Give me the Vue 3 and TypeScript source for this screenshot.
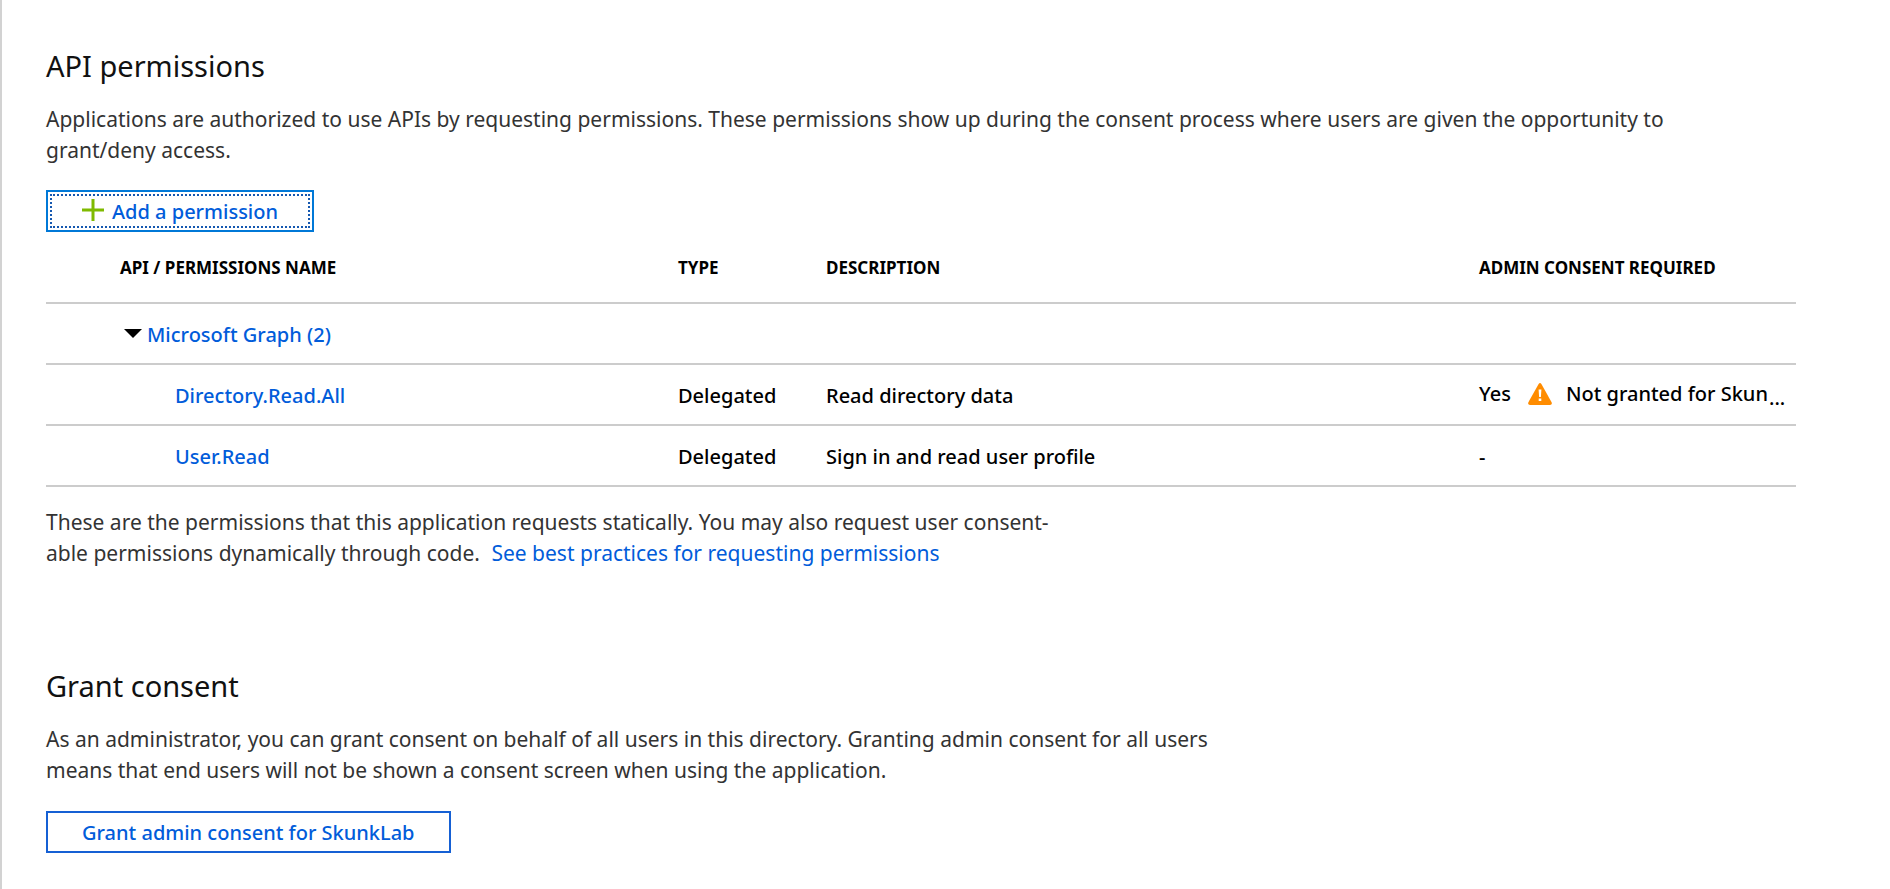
<script setup lang="ts">
import { ref } from 'vue'

interface Permission {
  name: string
  type: string
  description: string
  consent: string
  warning?: string
}

const expanded = ref(true)

const permissions: Permission[] = [
  {
    name: 'Directory.Read.All',
    type: 'Delegated',
    description: 'Read directory data',
    consent: 'Yes',
    warning: 'Not granted for Skun',
  },
  {
    name: 'User.Read',
    type: 'Delegated',
    description: 'Sign in and read user profile',
    consent: '-',
  },
]
</script>

<template>
  <main class="blade">
    <section class="permissions">
      <h1 class="title">API permissions</h1>
      <p class="text intro">
        Applications are authorized to use APIs by requesting permissions. These permissions show up
        during the consent process where users are given the opportunity to grant/deny access.
      </p>

      <button type="button" class="btn btn-focused">
        <svg class="plus" viewBox="0 0 22 22" aria-hidden="true">
          <path d="M11 0v22M0 11h22" />
        </svg>
        Add a permission
      </button>

      <table class="grid">
        <colgroup>
          <col class="col-name" />
          <col class="col-type" />
          <col />
          <col class="col-consent" />
        </colgroup>
        <thead>
          <tr>
            <th scope="col" class="name">API / PERMISSIONS NAME</th>
            <th scope="col">TYPE</th>
            <th scope="col">DESCRIPTION</th>
            <th scope="col">ADMIN CONSENT REQUIRED</th>
          </tr>
        </thead>
        <tbody>
          <tr>
            <td class="group" colspan="4">
              <button
                type="button"
                class="toggle"
                :aria-expanded="expanded"
                @click="expanded = !expanded"
              >
                <svg class="caret" viewBox="0 0 18 9" aria-hidden="true">
                  <path d="M0 0h18l-9 9z" />
                </svg>
                Microsoft Graph (2)
              </button>
            </td>
          </tr>
          <template v-if="expanded">
            <tr v-for="p in permissions" :key="p.name">
              <td class="item"><a href="#">{{ p.name }}</a></td>
              <td>{{ p.type }}</td>
              <td>{{ p.description }}</td>
              <td>
                <div v-if="p.warning" class="status">
                  <span>{{ p.consent }}</span>
                  <svg class="warn" viewBox="0 0 24 22" aria-hidden="true">
                    <path
                      class="warn-body"
                      d="M10.600 .9Q12-.8 13.400 .9L23.600 19.300Q24.400 21.800 22 22H2Q-.4 21.800 .4 19.300Z"
                    />
                    <path class="warn-mark" d="M10.600 6.500h2.800l-.5 7.500h-1.800zM10.700 15.500h2.600v2.600h-2.600z" />
                  </svg>
                  <span>{{ p.warning }}</span><span class="dots">...</span>
                </div>
                <template v-else>{{ p.consent }}</template>
              </td>
            </tr>
          </template>
        </tbody>
      </table>

      <p class="text note">
        <span>
          These are the permissions that this application requests statically. You may also request
          user consent-able permissions dynamically through code.
        </span>
        <a href="#" class="learn">See best practices for requesting permissions</a>
      </p>
    </section>

    <section>
      <h2 class="title">Grant consent</h2>
      <p class="text grant">
        As an administrator, you can grant consent on behalf of all users in this directory. Granting
        admin consent for all users means that end users will not be shown a consent screen when
        using the application.
      </p>
      <button type="button" class="btn">Grant admin consent for SkunkLab</button>
    </section>
  </main>
</template>

<style>
body {
  background: #fff;
}
</style>

<style scoped>
.blade {
  box-sizing: border-box;
  min-height: 100vh;
  padding: 46px 94px 32px 44px;
  border-left: 2px solid #d2d2d2;
  font-family: "Noto Sans", "Open Sans", sans-serif;
  color: #000;
}

.permissions {
  margin-bottom: 97px;
}

.title {
  margin: 0 0 18px;
  font-size: 29px;
  line-height: 40px;
  font-weight: 400;
  color: #111;
}

.text {
  margin: 0;
  font-size: 21px;
  line-height: 31px;
  color: #333;
}

.intro {
  max-width: 1680px;
  margin-bottom: 24px;
}

.note {
  max-width: 1030px;
  margin-top: 20px;
}

.grant {
  max-width: 1220px;
  margin-bottom: 25px;
}

a {
  color: #015cda;
  text-decoration: none;
}

.learn {
  margin-left: 6px;
}

.btn {
  display: flex;
  align-items: center;
  gap: 8px;
  box-sizing: border-box;
  height: 42px;
  padding: 2px 34px 0;
  border: 2px solid #1560d4;
  background: #fff;
  font: 500 20px/28px "Noto Sans", "Open Sans", sans-serif;
  color: #015cda;
}

.btn-focused {
  border-color: #0078d7;
  outline: 2px dotted #1558b0;
  outline-offset: -6px;
}

.plus {
  width: 22px;
  height: 22px;
  margin-bottom: 5px;
  fill: none;
  stroke: #7fba00;
  stroke-width: 3;
}

.grid {
  width: 100%;
  table-layout: fixed;
  border-collapse: separate;
  border-spacing: 0;
  font-size: 20px;
  line-height: 28px;
  font-weight: 500;
}

.col-name {
  width: 36%;
}

.col-type {
  width: 148px;
}

.col-consent {
  width: 319px;
}

th,
td {
  box-sizing: border-box;
  height: 61px;
  padding: 2px 0 0 2px;
  border-bottom: 2px solid #ccc;
  text-align: left;
  vertical-align: middle;
  white-space: nowrap;
}

th {
  height: 72px;
  font-size: 17px;
  font-weight: 700;
}

.name {
  padding-left: 74px;
}

.group {
  padding-left: 78px;
}

.item {
  padding-left: 129px;
}

.toggle {
  display: flex;
  align-items: center;
  gap: 5px;
  padding: 0;
  border: 0;
  background: none;
  font: inherit;
  color: #015cda;
}

.caret {
  width: 18px;
  height: 9px;
  margin-bottom: 3px;
  fill: #000;
}

.status {
  display: flex;
  align-items: center;
  padding-bottom: 4px;
}

.warn {
  width: 24px;
  height: 22px;
  margin: 0 14px 0 17px;
}

.warn-body {
  fill: #ff8c00;
}

.warn-mark {
  fill: #fff;
}

.dots {
  padding: 8px 0 0 1px;
}
</style>
